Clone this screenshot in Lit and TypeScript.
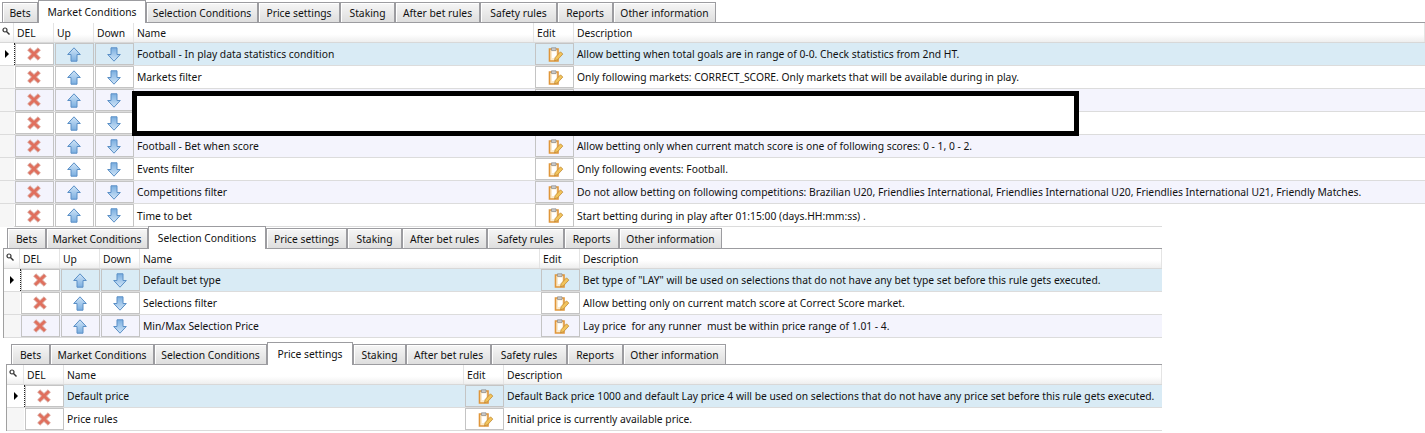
import { LitElement, html, css, svg } from "lit";
import { customElement } from "lit/decorators.js";

const TABS = ["Bets","Market Conditions","Selection Conditions","Price settings","Staking","After bet rules","Safety rules","Reports","Other information"];

interface Row { name: string; desc: string; }
interface Panel { cls: string; active: number; widths: number[]; moves: boolean; rows: Row[]; }

const PANELS: Panel[] = [
  { cls: "p1", active: 1, widths: [36,108,112,82,55,85,77,56,103], moves: true, rows: [
    { name: "Football - In play data statistics condition", desc: "Allow betting when total goals are in range of 0-0. Check statistics from 2nd HT." },
    { name: "Markets filter", desc: "Only following markets: CORRECT_SCORE. Only markets that will be available during in play." },
    { name: "", desc: "" },
    { name: "", desc: "" },
    { name: "Football - Bet when score", desc: "Allow betting only when current match score is one of following scores: 0 - 1, 0 - 2." },
    { name: "Events filter", desc: "Only following events: Football." },
    { name: "Competitions filter", desc: "Do not allow betting on following competitions: Brazilian U20, Friendlies International, Friendlies International U20, Friendlies International U21, Friendly Matches." },
    { name: "Time to bet", desc: "Start betting during in play after 01:15:00 (days.HH:mm:ss) ." },
  ]},
  { cls: "p2", active: 2, widths: [39,102,118,81,55,85,77,55,103], moves: true, rows: [
    { name: "Default bet type", desc: 'Bet type of "LAY" will be used on selections that do not have any bet type set before this rule gets executed.' },
    { name: "Selections filter", desc: "Allow betting only on current match score at Correct Score market." },
    { name: "Min/Max Selection Price", desc: "Lay price  for any runner  must be within price range of 1.01 - 4." },
  ]},
  { cls: "p3", active: 3, widths: [39,104,113,86,53,85,76,56,103], moves: false, rows: [
    { name: "Default price", desc: "Default Back price 1000 and default Lay price 4 will be used on selections that do not have any price set before this rule gets executed." },
    { name: "Price rules", desc: "Initial price is currently available price." },
  ]},
];

const xIcon = svg`<svg class="ico" width="14" height="14" viewBox="0 0 14 14"><path d="M3 .8 7 4.500 11 .8l2.300 2.400L9.500 7l3.800 3.800L11 13.200 7 9.500 3 13.200.7 10.800 4.500 7 .7 3.200z" fill="#e0705e" stroke="#d8a89f" stroke-width=".9" stroke-linejoin="round"/></svg>`;
const upIcon = svg`<svg class="ico" width="14" height="15" viewBox="0 0 14 15"><defs><linearGradient id="ua" x1="0" y1="0" x2="0" y2="1"><stop offset="0" stop-color="#cfe4f7"/><stop offset="1" stop-color="#7aaee0"/></linearGradient></defs><path d="M7 .8 13.300 7.500H10v6.700H4V7.500H.7z" fill="url(#ua)" stroke="#5a8fc6" stroke-width="1" stroke-linejoin="round"/></svg>`;
const downIcon = svg`<svg class="ico" width="14" height="15" viewBox="0 0 14 15"><defs><linearGradient id="da" x1="0" y1="0" x2="0" y2="1"><stop offset="0" stop-color="#7aaee0"/><stop offset="1" stop-color="#cfe4f7"/></linearGradient></defs><path d="M4 .8h6V7.500h3.300L7 14.200.7 7.500H4z" fill="url(#da)" stroke="#5a8fc6" stroke-width="1" stroke-linejoin="round"/></svg>`;
const editIcon = svg`<svg class="ico" width="16" height="15" viewBox="0 0 16 15"><path d="M1.500 2h8.500v12H1.500z" fill="#fbeacb" stroke="#e0963a" stroke-width="1.600"/><path d="M3.500 .8h4.500v2.700H3.500z" fill="#c9c9c9" stroke="#8d8d8d" stroke-width=".7"/><path d="M4 4.500h4.200v6.500H4z" fill="#fff"/><path d="M6.500 13.800 7.200 10.500 12.500 4.800l2.300 2.300-5.300 5.700z" fill="#f2c45c" stroke="#c08a34" stroke-width=".8"/></svg>`;
const searchIcon = svg`<svg width="8" height="8" viewBox="0 0 8 8"><circle cx="3" cy="3" r="2" fill="none" stroke="#333" stroke-width="1.200"/><path d="M4.500 4.500 7.500 7.500" stroke="#333" stroke-width="1.400"/></svg>`;

@customElement("app-root")
export class AppRoot extends LitElement {
  static styles = css`
    :host { display: block; position: relative; width: 1425px; height: 433px; overflow: hidden; background: #fff;
      font-family: "Noto Sans", Tahoma, sans-serif; font-size: 10.3px; color: #111; }
    .panel { box-sizing: border-box; }
    .p1 { width: 1425px; height: 226px; }
    .p2 { width: 1159px; height: 116px; margin-left: 3px; }
    .p3 { width: 1156px; height: 91px; margin-left: 6px; }
    .p2 .body, .p3 .body { border-left: 1px solid #a0a0a0; }
    .tabs { display: flex; height: 23px; box-sizing: border-box; border-bottom: 1px solid #9c9ca0; }
    .p1 .tabs { padding-left: 2px; }
    .p2 .tabs { padding-left: 4px; }
    .p3 .tabs { padding-left: 5px; }
    .tab { box-sizing: border-box; height: 20px; margin-top: 2px; border: 1px solid #9c9ca0; border-bottom: 0;
      background: linear-gradient(#f6f6f6, #dedede); display: flex; align-items: center; justify-content: center;
      white-space: nowrap; padding-top: 1px; box-shadow: inset 1px 1px 0 #fff; }
    .tab.active { height: 23px; margin-top: 0; background: #fff; padding-top: 0; padding-bottom: 1px; box-shadow: none; }
    .hdr, .row { display: grid; }
    .p1 .hdr, .p1 .row { grid-template-columns: 14px 40px 40px 40px 400px 40px 1fr; }
    .p2 .hdr, .p2 .row { grid-template-columns: 16px 40px 40px 40px 400px 40px 1fr; }
    .p3 .hdr, .p3 .row { grid-template-columns: 17px 40px 400px 40px 1fr; }
    .hdr { height: 20px; background: linear-gradient(#fff 60%, #eeeeee); border-bottom: 1px solid #d8d8d8; box-sizing: border-box; }
    .hc { display: flex; align-items: center; padding-left: 3px; border-right: 1px solid #e4e4e4; white-space: nowrap; }
    .hc.first { padding-left: 2px; padding-bottom: 3px; }
    .row { height: 23px; box-sizing: border-box; border-bottom: 1px solid #dcdcdc; }
    .p1 .row:last-child { border-bottom: 0; background: linear-gradient(#dcdcdc, #dcdcdc) 0 100% / 1162px 1px no-repeat; }
    .rh { background: #f6f6f6; display: flex; align-items: center; justify-content: center; box-sizing: border-box; }
    .row.sel .rh { background: #fff; border-right: 1px dotted #222; margin-right: -1px; position: relative; }
    .arrow { width: 0; height: 0; border-left: 4px solid #000; border-top: 4px solid transparent; border-bottom: 4px solid transparent; }
    .row.alt { background: #f4f4fd; }
    .row.sel { background: #d9ebf5; }
    .btn { box-sizing: border-box; margin: 0 0 0 1px; border: 1px solid #c4c4c4; padding-right: 1px;
      display: flex; align-items: center; justify-content: center; }
    .btn.edit { padding-right: 0; padding-left: 2px; }
    .btn.del { background: #fff; }
    .row.alt .btn.del { background: #f4f4fd; }
    .txt { display: flex; align-items: center; padding-left: 3px; white-space: pre; }
    .ico { display: block; }
    .mask { position: absolute; left: 132px; top: 91px; width: 947px; height: 45px; box-sizing: border-box; border: 5px solid #000; background: #fff; }
  `;

  renderPanel(p: Panel) {
    const heads = p.moves ? ["DEL","Up","Down","Name","Edit","Description"] : ["DEL","Name","Edit","Description"];
    return html`<div class="panel ${p.cls}">
      <div class="tabs">
        ${TABS.map((t, i) => html`<div class="tab ${i === p.active ? "active" : ""}" style="width:${p.widths[i]}px">${t}</div>`)}
      </div>
      <div class="body">
        <div class="hdr">
          <div class="hc first">${searchIcon}</div>
          ${heads.map((h) => html`<div class="hc">${h}</div>`)}
        </div>
        ${p.rows.map((r, i) => html`<div class="row ${i === 0 ? "sel" : i % 2 === 0 ? "alt" : ""}">
          <div class="rh">${i === 0 ? html`<div class="arrow"></div>` : ""}</div>
          <div class="btn del">${xIcon}</div>
          ${p.moves ? html`<div class="btn">${upIcon}</div><div class="btn">${downIcon}</div>` : ""}
          <div class="txt">${r.name}</div>
          <div class="btn edit">${editIcon}</div>
          <div class="txt desc">${r.desc}</div>
        </div>`)}
      </div>
    </div>`;
  }

  render() {
    return html`${PANELS.map((p) => this.renderPanel(p))}<div class="mask"></div>`;
  }
}
